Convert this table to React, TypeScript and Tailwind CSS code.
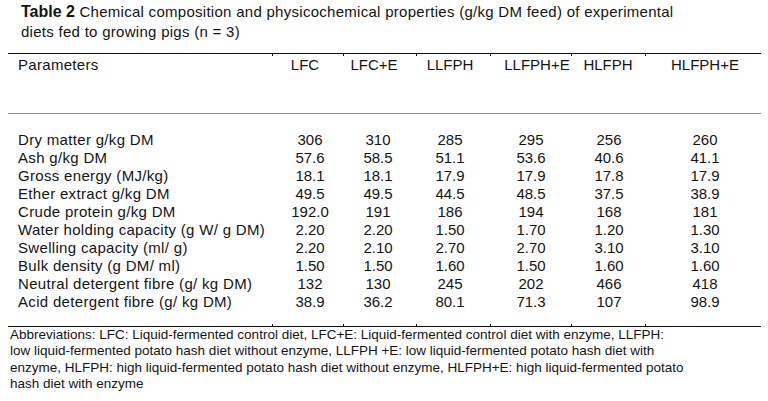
import React from "react";

const cols = "grid grid-cols-[265px_71px_73px_74px_81px_74px_115px]";

const headers = [
  { t: "LFC", c: "pr-[7px]" },
  { t: "LFC+E", c: "pr-[13px]" },
  { t: "LLFPH", c: "pr-[8px]" },
  { t: "LLFPH+E", c: "pl-[11px]" },
  { t: "HLFPH", c: "pr-[2px]" },
  { t: "HLFPH+E", c: "pl-[3px]" },
];

const valPad = ["pl-[3px]", "pr-[5px]", "pr-[8px]", "pr-[1px]", "", "pl-[3px]"];

const rows: [string, string[]][] = [
  ["Dry matter g/kg DM", ["306", "310", "285", "295", "256", "260"]],
  ["Ash g/kg DM", ["57.6", "58.5", "51.1", "53.6", "40.6", "41.1"]],
  ["Gross energy (MJ/kg)", ["18.1", "18.1", "17.9", "17.9", "17.8", "17.9"]],
  ["Ether extract g/kg DM", ["49.5", "49.5", "44.5", "48.5", "37.5", "38.9"]],
  ["Crude protein g/kg DM", ["192.0", "191", "186", "194", "168", "181"]],
  ["Water holding capacity (g W/ g DM)", ["2.20", "2.20", "1.50", "1.70", "1.20", "1.30"]],
  ["Swelling capacity (ml/ g)", ["2.20", "2.10", "2.70", "2.70", "3.10", "3.10"]],
  ["Bulk density (g DM/ ml)", ["1.50", "1.50", "1.60", "1.50", "1.60", "1.60"]],
  ["Neutral detergent fibre (g/ kg DM)", ["132", "130", "245", "202", "466", "418"]],
  ["Acid detergent fibre (g/ kg DM)", ["38.9", "36.2", "80.1", "71.3", "107", "98.9"]],
];

function TopRule() {
  return (
    <div className={cols}>
      {[0, 1, 2, 3, 4, 5].map((i) => (
        <div key={i} className="h-[3px] border-t border-r border-[#111]" />
      ))}
      <div className="h-[3px] border-t border-[#111]" />
    </div>
  );
}

function BottomRule() {
  return (
    <div className={cols}>
      {[0, 1, 2, 3, 4, 5].map((i) => (
        <div key={i} className="h-[3px] border-b border-r border-[#111]" />
      ))}
      <div className="h-[3px] border-b border-[#111]" />
    </div>
  );
}

export default function App() {
  return (
    <div
      className="w-[768px] h-[401px] bg-white text-[#141414] overflow-hidden"
      style={{ fontFamily: '"Liberation Sans", Arial, sans-serif' }}
    >
      <div className="pt-[2px] pl-[21px] text-[15px] leading-[20px] tracking-[0.28px]">
        <div className="whitespace-nowrap">
          <span className="font-bold text-[16px] tracking-normal">Table 2</span> Chemical composition and
          physicochemical properties (g/kg DM feed) of experimental
        </div>
        <div>diets fed to growing pigs (n = 3)</div>
      </div>

      <div className="ml-[8px] w-[753px] mt-[11px]">
        <TopRule />
        <div className={`${cols} h-[57px] text-[15px] leading-[18px] whitespace-nowrap`}>
          <div className="pl-[10px] tracking-[0.3px]">Parameters</div>
          {headers.map((h) => (
            <div key={h.t} className={`text-center ${h.c}`}>
              {h.t}
            </div>
          ))}
        </div>
        <div className="h-[1px] bg-[#8a8a8a]" />
        <div className="pt-[17px] pb-[13px] text-[15px] leading-[18px] whitespace-nowrap">
          {rows.map(([label, vals]) => (
            <div key={label} className={cols}>
              <div className="pl-[10px] tracking-[0.32px]">{label}</div>
              {vals.map((v, i) => (
                <div key={i} className={`text-center ${valPad[i]}`}>
                  {v}
                </div>
              ))}
            </div>
          ))}
        </div>
        <BottomRule />
        <div className="pl-[2px] pt-[0px] text-[13.5px] leading-[16.4px] whitespace-nowrap">
          Abbreviations: LFC: Liquid-fermented control diet, LFC+E: Liquid-fermented control diet with enzyme, LLFPH:
          <br />
          low liquid-fermented potato hash diet without enzyme, LLFPH +E: low liquid-fermented potato hash diet with
          <br />
          enzyme, HLFPH: high liquid-fermented potato hash diet without enzyme, HLFPH+E: high liquid-fermented potato
          <br />
          hash diet with enzyme
        </div>
      </div>
    </div>
  );
}
